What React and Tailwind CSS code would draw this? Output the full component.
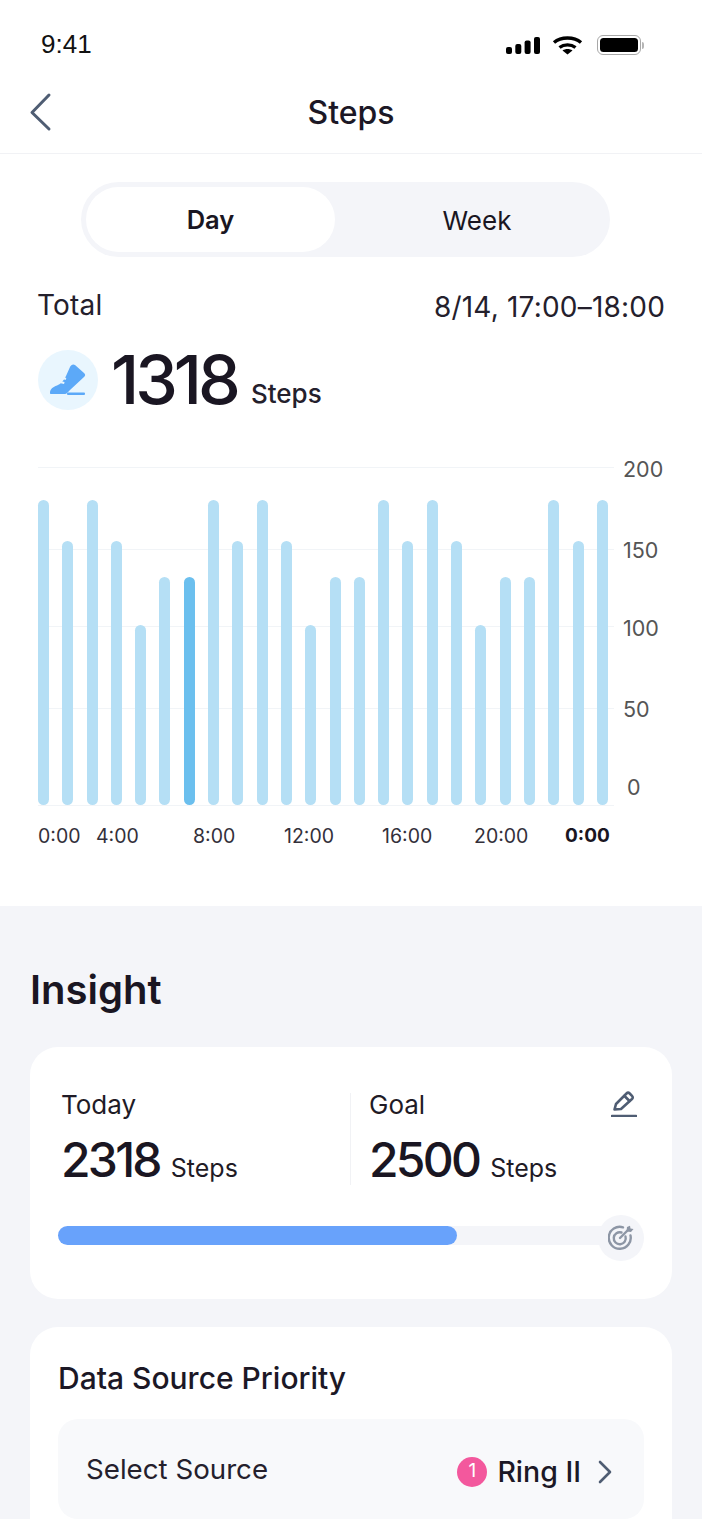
const bars = [305,264,305,264,180,228,228,305,264,305,264,180,228,228,305,264,305,264,180,228,228,305,264,305];
const gridTops = ['top-[0px]','top-[82px]','top-[159px]','top-[241px]','top-[338px]'];

function Card({ className = '', children }) {
  return <div className={`rounded-[28px] bg-white ${className}`}>{children}</div>;
}

function Stat({ label, value }) {
  return (
    <div>
      <div className="text-[26px] leading-[32px] text-[#1f1b26]">{label}</div>
      <div className="mt-[11px] flex items-baseline gap-[11px]">
        <span className="text-[48px] leading-[56px] font-medium tracking-[-2.750px] text-[#1a1622]">{value}</span>
        <span className="text-[25px] leading-[30px] text-[#1f1b26]">Steps</span>
      </div>
    </div>
  );
}

export default function App() {
  return (
    <div className="h-[1519px] w-[702px] overflow-hidden bg-[#f4f5f9] font-['Inter',sans-serif] text-[#1a1622]">
      <div className="bg-white">
        <div className="flex h-[74px] items-end justify-between pr-[58px] pl-[41px] pb-[15px]">
          <span className="font-['Liberation_Sans',sans-serif] text-[26px] leading-[30px] text-[#111]">9:41</span>
          <div className="flex items-center pb-[4px]">
            <svg width="34" height="17" viewBox="0 0 34 17" fill="#000">
              <rect x="0" y="10" width="6" height="7" rx="2" /><rect x="9.300" y="7" width="6" height="10" rx="2" />
              <rect x="18.600" y="3.500" width="6" height="13.500" rx="2" /><rect x="28" y="0" width="6" height="17" rx="2" />
            </svg>
            <svg className="ml-[12px]" width="31" height="19" viewBox="0 0 31 19" fill="none" stroke="#000" strokeWidth="3.400">
              <path d="M2 6.500C9 .5 22 .5 29 6.500" /><path d="M7.500 11.500C12 8 19 8 23.500 11.500" />
              <path d="M15.500 18.500 10.500 14.500C13.500 12.500 17.500 12.500 20.500 14.500Z" fill="#000" stroke="none" />
            </svg>
            <div className="ml-[14px] flex items-center">
              <div className="h-[20px] w-[44px] rounded-[6px] border-[1.5px] border-[#a8a8a8] p-[2px]">
                <div className="h-full w-full rounded-[3.500px] bg-black" />
              </div>
              <div className="ml-[1px] h-[7px] w-[2px] rounded-r-full bg-[#b5b5b5]" />
            </div>
          </div>
        </div>

        <div className="relative flex h-[80px] items-center justify-center border-b border-[#f1f2f5]">
          <svg className="absolute top-[18px] left-[22px]" width="32" height="40" viewBox="0 0 32 40" fill="none" stroke="#4f5d73" strokeWidth="3" strokeLinecap="round" strokeLinejoin="round">
            <path d="M27 3 10 20.500 27 37" />
          </svg>
          <span className="mb-[2px] text-[32px] leading-[36px] font-medium text-[#1c1826]">Steps</span>
        </div>

        <div className="flex pt-[28px] pl-[81px]">
          <div className="flex h-[75px] w-[529px] rounded-full bg-[#f4f5f9] p-[5px]">
            <div className="flex h-[65px] w-[249px] items-center justify-center rounded-full bg-white pt-[2px] text-[25.500px] font-semibold">Day</div>
            <div className="flex flex-1 items-center justify-center pt-[2px] pl-[14px] text-[26px]">Week</div>
          </div>
        </div>

        <div className="flex items-start justify-between pt-[30px] pr-[37px] pl-[37px]">
          <span className="text-[28px] leading-[36px] tracking-[0.2px] text-[#24202c]">Total</span>
          <span className="mt-[2px] text-[28px] leading-[36px] tracking-[0.2px] text-[#24202c]">8/14, 17:00–18:00</span>
        </div>

        <div className="mt-[14px] flex items-center pl-[38px]">
          <div className="mt-[2px] flex h-[60px] w-[60px] items-center justify-center rounded-full bg-[#e9f6fe]">
            <svg width="36" height="32" viewBox="0 0 36 32" fill="#5ca9f8">
              <path d="M0 29C0 25 3 23 7 21.500C11 20 14 16 16 12L20 3C21 1 23-.5 25 1L34 9C35.500 10 35.500 12 34 13L20 26C18 28 16.500 30 15 30H1.500C.5 30 0 30 0 29Z" />
              <rect x="17" y="28.500" width="18" height="2.500" rx="1" />
              <path d="M11 13.300 16 15M8.700 17.700 14.300 19" stroke="#e9f6fe" strokeWidth="2.200" />
            </svg>
          </div>
          <span className="ml-[13px] text-[68px] leading-[80px] font-medium tracking-[-4px] text-[#1a1622]">1318</span>
          <span className="mt-[30px] ml-[14px] text-[26px] leading-[32px] font-medium text-[#24202c]">Steps</span>
        </div>

        <div className="mt-[48px] pl-[38px]">
          <div className="relative h-[339px] w-[626px]">
            {gridTops.map((t, i) => (
              <div key={i} className={`absolute left-0 flex w-full items-center ${t}`}>
                <div className="h-px w-[576px] bg-[#f1f4f7]" />
              </div>
            ))}
            <div className="absolute top-[-12px] left-[585px] text-[21.500px] leading-[28px] text-[#555]">200</div>
            <div className="absolute top-[69px] left-[585px] text-[21.500px] leading-[28px] text-[#555]">150</div>
            <div className="absolute top-[147px] left-[585px] text-[21.500px] leading-[28px] text-[#555]">100</div>
            <div className="absolute top-[228px] left-[585px] text-[21.500px] leading-[28px] text-[#555]">50</div>
            <div className="absolute top-[306px] left-[589px] text-[21.500px] leading-[28px] text-[#555]">0</div>
            <div className="relative flex h-[338px] w-[570px] items-end justify-between">
              {bars.map((h, i) => (
                <div
                  key={i}
                  className={`w-[11px] rounded-full ${i === 6 ? 'bg-[#6bbfee]' : 'bg-[#b5dff5]'}`}
                  style={{ height: h }}
                />
              ))}
            </div>
          </div>
          <div className="relative mt-[16px] h-[28px] text-[19.500px] leading-[28px] text-[#33303a]">
            <span className="absolute left-0">0:00</span>
            <span className="absolute left-[58px]">4:00</span>
            <span className="absolute left-[155px]">8:00</span>
            <span className="absolute left-[246px]">12:00</span>
            <span className="absolute left-[344px]">16:00</span>
            <span className="absolute left-[436px]">20:00</span>
            <span className="absolute left-[527px] text-[19px] font-bold text-[#1a1622]">0:00</span>
          </div>
        </div>
        <div className="h-[56px]" />
      </div>

      <div className="px-[30px] pt-[60px]">
        <h2 className="text-[40px] leading-[48px] font-semibold text-[#1a1622]">Insight</h2>
        <Card className="mt-[33px] h-[252px] px-[28px] pt-[42px]">
          <div className="flex pl-[3px]">
            <div className="w-[289px]"><Stat label="Today" value="2318" /></div>
            <div className="mt-[4px] h-[92px] w-px bg-[#f1f2f5]" />
            <div className="relative flex-1 pl-[18px]">
              <Stat label="Goal" value="2500" />
              <svg className="absolute top-[2px] right-[7px]" width="26" height="26" viewBox="0 0 26 26" fill="none" stroke="#4f5d73" strokeWidth="2.600" strokeLinejoin="round" strokeLinecap="round">
                <path d="M3.500 18.500 5 13 15.500 2.500c1-1 2.200-1 3.200 0l2.300 2.300c1 1 1 2.200 0 3.200L10 18l-6.500.5Z" />
                <path d="M13.500 5 18.500 10" />
                <path d="M1 25H25" />
              </svg>
            </div>
          </div>
          <div className="relative mt-[38px] h-[19px] w-[570px] rounded-full bg-[#f4f5f9]">
            <div className="h-full w-[399px] rounded-full bg-[#68a2fb]" />
            <div className="absolute top-[-11px] right-[-16px] flex h-[46px] w-[46px] items-center justify-center rounded-full bg-[#f4f5f9]">
              <svg width="26" height="26" viewBox="0 0 26 26" fill="none" stroke="#8d96a5" strokeWidth="2.400" strokeLinecap="round">
                <path d="M22.500 10.500A11 11 0 1 1 15 2.300" />
                <path d="M17.500 11.500A6 6 0 1 1 13.500 7.500" />
                <path d="M12 13 20 5" />
                <path d="M19 2 18.500 6.500 23 7 25.500 4 22.500 3.500 22 .8Z" fill="#8d96a5" stroke="none" />
              </svg>
            </div>
          </div>
        </Card>
        <Card className="mt-[28px] h-[300px] px-[28px] pt-[32px]">
          <div className="text-[30px] leading-[38px] font-medium text-[#1c1826]">Data Source Priority</div>
          <div className="mt-[22px] flex h-[100px] items-center justify-between rounded-[20px] bg-[#f8f9fb] pr-[31px] pl-[28px]">
            <span className="text-[27.700px] leading-[34px] text-[#24202c]">Select Source</span>
            <div className="mt-[5px] flex items-center">
              <span className="flex h-[30px] w-[30px] items-center justify-center rounded-full bg-[#f3589d] text-[19px] text-white">1</span>
              <span className="ml-[10px] text-[28.500px] leading-[34px] font-medium text-[#1c1826]">Ring II</span>
              <svg className="ml-[16px]" width="16" height="24" viewBox="0 0 16 24" fill="none" stroke="#4f5d73" strokeWidth="2.600" strokeLinecap="round" strokeLinejoin="round">
                <path d="M3 2 13 12 3 22" />
              </svg>
            </div>
          </div>
        </Card>
      </div>
    </div>
  );
}
